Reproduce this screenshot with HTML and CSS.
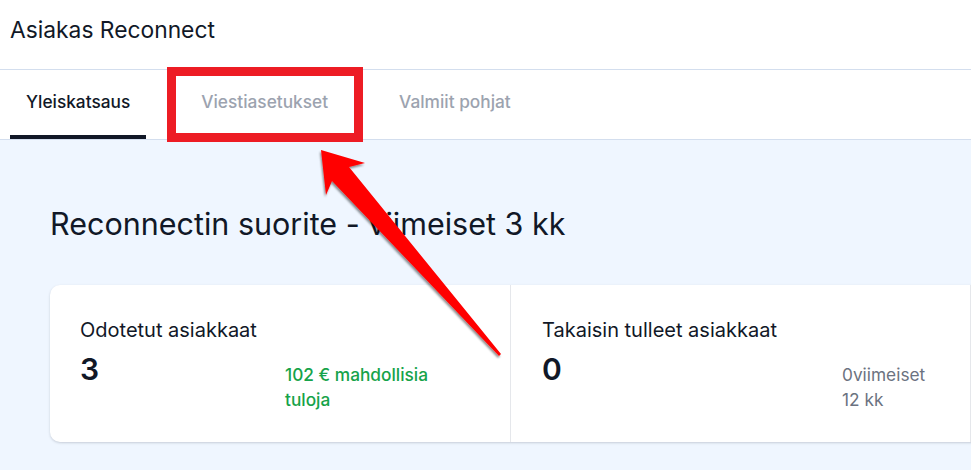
FILE: index.html
```html
<!DOCTYPE html>
<html lang="fi">
<head>
<meta charset="utf-8">
<title>Asiakas Reconnect</title>
<link rel="stylesheet" href="styles.css">
</head>
<body>
<div class="page">
  <header class="topbar">
    <h1 class="app-title">Asiakas Reconnect</h1>
  </header>
  <nav class="tabs">
    <a class="tab tab-active">Yleiskatsaus</a>
    <a class="tab">Viestiasetukset</a>
    <a class="tab">Valmiit pohjat</a>
  </nav>
  <main class="content">
    <h2 class="section-title">Reconnectin suorite - viimeiset 3 kk</h2>
    <section class="stats-card">
      <div class="stat">
        <div class="stat-label">Odotetut asiakkaat</div>
        <div class="stat-row">
          <div class="stat-value">3</div>
          <div class="stat-note note-green">102 € mahdollisia tuloja</div>
        </div>
      </div>
      <div class="stat">
        <div class="stat-label">Takaisin tulleet asiakkaat</div>
        <div class="stat-row">
          <div class="stat-value">0</div>
          <div class="stat-note note-gray">0viimeiset 12 kk</div>
        </div>
      </div>
      <div class="stat">
        <div class="stat-label">&nbsp;</div>
      </div>
    </section>
  </main>

  <div class="highlight-box"></div>
  <svg class="annotation-arrow" width="971" height="470" viewBox="0 0 971 470" aria-hidden="true">
    <defs>
      <filter id="arrowShadow" x="-20%" y="-20%" width="140%" height="140%">
        <feDropShadow dx="-1" dy="2" stdDeviation="1.2" flood-color="#000" flood-opacity="0.45"/>
      </filter>
    </defs>
    <polygon points="321,150 365,163 349,167 501,354 499,356 332,181 326,195" fill="#ff0000" filter="url(#arrowShadow)"/>
  </svg>
</div>
</body>
</html>
```

FILE: styles.css
```css
* {
  box-sizing: border-box;
}

html, body {
  margin: 0;
  padding: 0;
  width: 971px;
  height: 470px;
  overflow: hidden;
  background: #eff6ff;
}

body {
  font-family: Inter, "Noto Sans", "Liberation Sans", sans-serif;
  color: #111827;
}

.page {
  position: relative;
  width: 971px;
  height: 470px;
  overflow: hidden;
  background: #eff6ff;
}

.topbar {
  height: 70px;
  padding: 15px 0 0 10px;
  background: #ffffff;
  border-bottom: 1px solid #d3deee;
}

.app-title {
  margin: 0;
  font-size: 22.8px;
  font-weight: 400;
  line-height: 30px;
  color: #111827;
}

.tabs {
  height: 70px;
  padding-left: 10px;
  display: flex;
  gap: 39px;
  background: #ffffff;
  border-bottom: 1px solid #d3deee;
}

.tab {
  display: flex;
  align-items: center;
  padding: 0 16px 2px;
  font-size: 17.3px;
  font-weight: 500;
  color: #9ca3af;
  border-bottom: 4px solid transparent;
  cursor: pointer;
}

.tab-active {
  color: #111827;
  border-bottom-color: #111827;
}

.content {
  padding: 66px 0 0 50px;
}

.section-title {
  margin: 0;
  font-size: 30.5px;
  line-height: 36px;
  font-weight: 400;
  color: #111827;
}

.stats-card {
  margin-top: 43px;
  width: 1380px;
  display: grid;
  grid-template-columns: 460px 460px 460px;
  background: #ffffff;
  border-radius: 10px;
  box-shadow: 0 1px 3px rgba(15, 23, 42, 0.12), 0 1px 2px rgba(15, 23, 42, 0.06);
}

.stat {
  padding: 31px 30px 30px;
}

.stat + .stat {
  border-left: 1px solid #e5e7eb;
  padding-left: 31px;
}

.stat-label {
  font-size: 20px;
  line-height: 28px;
  font-weight: 400;
  color: #111827;
}

.stat-row {
  margin-top: 7px;
  display: flex;
  justify-content: space-between;
  align-items: flex-start;
}

.stat-value {
  font-size: 30px;
  line-height: 36px;
  font-weight: 600;
  color: #111827;
}

.stat-note {
  margin-top: 11px;
  font-size: 17.3px;
  line-height: 25px;
  font-weight: 500;
}

.note-green {
  width: 165px;
  margin-right: 30px;
  color: #16a34a;
}

.note-gray {
  width: 98px;
  font-weight: 400;
  color: #6b7280;
}

.highlight-box {
  position: absolute;
  left: 167px;
  top: 67px;
  width: 196px;
  height: 75px;
  border: 9px solid #ed1c24;
}

.annotation-arrow {
  position: absolute;
  left: 0;
  top: 0;
  pointer-events: none;
}
```
